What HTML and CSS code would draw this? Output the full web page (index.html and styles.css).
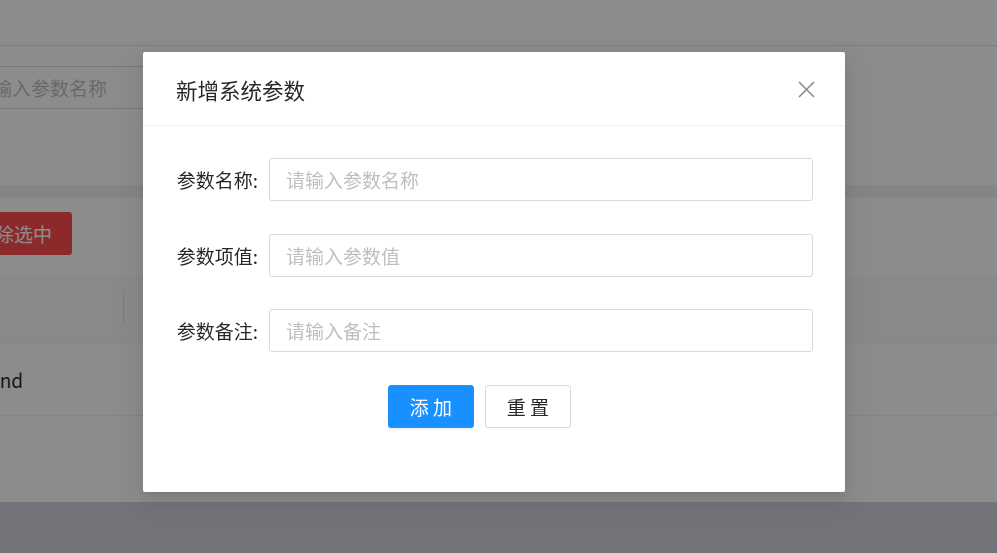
FILE: index.html
```html
<!DOCTYPE html>
<html lang="zh-CN">
<head>
<meta charset="utf-8">
<title>新增系统参数</title>
<link rel="stylesheet" href="styles.css">
</head>
<body>
<div class="page">
  <div class="topbar"></div>
  <div class="search">
    <div class="search-input">请输入参数名称</div>
  </div>
  <div class="gap"></div>
  <div class="card">
    <div class="toolbar"><span class="btn-danger">删除选中</span></div>
    <div class="table">
      <div class="thead"><span class="th-divider"></span></div>
      <div class="trow"><span class="cell">bnd</span></div>
    </div>
  </div>
  <div class="footer"></div>
</div>
<div class="mask"></div>
<div class="modal">
  <div class="modal-header">
    <div class="modal-title">新增系统参数</div>
    <svg class="close" width="17" height="17" viewBox="0 0 17 17"><path d="M1 1L16 16M16 1L1 16" stroke="#8c8c8c" stroke-width="1.6" fill="none"/></svg>
  </div>
  <div class="modal-body">
    <div class="form-item">
      <label class="label">参数名称:</label>
      <div class="input placeholder">请输入参数名称</div>
    </div>
    <div class="form-item">
      <label class="label">参数项值:</label>
      <div class="input placeholder">请输入参数值</div>
    </div>
    <div class="form-item">
      <label class="label">参数备注:</label>
      <div class="input placeholder">请输入备注</div>
    </div>
    <div class="actions">
      <span class="btn btn-primary">添 加</span>
      <span class="btn btn-default">重 置</span>
    </div>
  </div>
</div>
</body>
</html>
```

FILE: styles.css
```css
html, body {
  margin: 0;
  padding: 0;
}
body {
  width: 997px;
  height: 553px;
  overflow: hidden;
  font-family: "Noto Sans CJK SC", "Noto Sans", sans-serif;
  font-size: 19px;
  background: #ffffff;
}
.page {
  display: flex;
  flex-direction: column;
  height: 553px;
}
.topbar {
  height: 45px;
  background: #fff;
  border-bottom: 1px solid #e4e4e4;
  flex: none;
}
.search {
  height: 139px;
  background: #fff;
  padding-top: 20px;
  box-sizing: border-box;
  flex: none;
}
.search-input {
  margin-left: -42px;
  width: 400px;
  height: 41px;
  border-top: 1px solid #d9d9d9;
  border-bottom: 1px solid #d9d9d9;
  color: #bfbfbf;
  line-height: 41px;
  font-size: 19px;
  padding-left: 16px;
  box-sizing: content-box;
}
.gap {
  height: 13px;
  background: #f0f2f5;
  flex: none;
}
.card {
  height: 304px;
  background: #fff;
  flex: none;
  padding-top: 14px;
  box-sizing: border-box;
}
.toolbar {
  height: 43px;
}
.btn-danger {
  display: inline-flex;
  align-items: center;
  justify-content: flex-end;
  margin-left: -40px;
  width: 112px;
  padding-right: 20px;
  box-sizing: border-box;
  height: 43px;
  background: #ff4d4f;
  color: #fff;
  border-radius: 3px;
  font-size: 19px;
}
.table {
  margin-top: 21px;
}
.thead {
  height: 66px;
  background: #fafafa;
  border-bottom: 1px solid #f0f0f0;
  display: flex;
  align-items: center;
}
.th-divider {
  margin-left: 123px;
  width: 1px;
  height: 30px;
  background: #e0e0e0;
}
.trow {
  height: 72px;
  border-bottom: 1px solid #f0f0f0;
  display: flex;
  align-items: center;
}
.cell {
  margin-left: -12px;
  color: rgba(0, 0, 0, 0.85);
  font-size: 19px;
}
.footer {
  flex: 1;
  background: #d1d3dc;
}
.mask {
  position: fixed;
  inset: 0;
  background: rgba(0, 0, 0, 0.45);
}
.modal {
  position: absolute;
  left: 143px;
  top: 52px;
  width: 702px;
  height: 440px;
  background: #fff;
  border-radius: 2px;
  box-shadow: 0 3px 6px -4px rgba(0,0,0,.12), 0 6px 16px 0 rgba(0,0,0,.08), 0 9px 28px 8px rgba(0,0,0,.05);
  box-sizing: border-box;
}
.modal-header {
  height: 74px;
  box-sizing: border-box;
  border-bottom: 1px solid #f0f0f0;
  display: flex;
  align-items: center;
  justify-content: space-between;
  padding: 2px 30px 0 33px;
}
.modal-title {
  font-size: 21.5px;
  color: rgba(0, 0, 0, 0.85);
  line-height: 28px;
}
.close {
  display: block;
}
.modal-body {
  padding: 32px 32px 0 33px;
}
.form-item {
  display: flex;
  align-items: center;
  margin-bottom: 32.5px;
}
.label {
  width: 93px;
  flex: none;
  padding-right: 11px;
  box-sizing: border-box;
  text-align: right;
  color: rgba(0, 0, 0, 0.85);
  font-size: 19px;
  white-space: nowrap;
}
.input {
  width: 544px;
  height: 43px;
  box-sizing: border-box;
  border: 1px solid #d9d9d9;
  border-radius: 3px;
  padding-left: 16px;
  line-height: 41px;
  font-size: 19px;
}
.placeholder {
  color: #bfbfbf;
}
.actions {
  display: flex;
  gap: 11px;
  margin-left: 212px;
  margin-top: 0.5px;
}
.btn {
  width: 86px;
  height: 43px;
  box-sizing: border-box;
  border-radius: 3px;
  display: flex;
  align-items: center;
  justify-content: center;
  font-size: 19px;
}
.btn-primary {
  background: #1890ff;
  border: 1px solid #1890ff;
  color: #fff;
  box-shadow: 0 2px 0 rgba(0, 0, 0, 0.045);
}
.btn-default {
  background: #fff;
  border: 1px solid #d9d9d9;
  color: rgba(0, 0, 0, 0.85);
  box-shadow: 0 2px 0 rgba(0, 0, 0, 0.016);
}
```
